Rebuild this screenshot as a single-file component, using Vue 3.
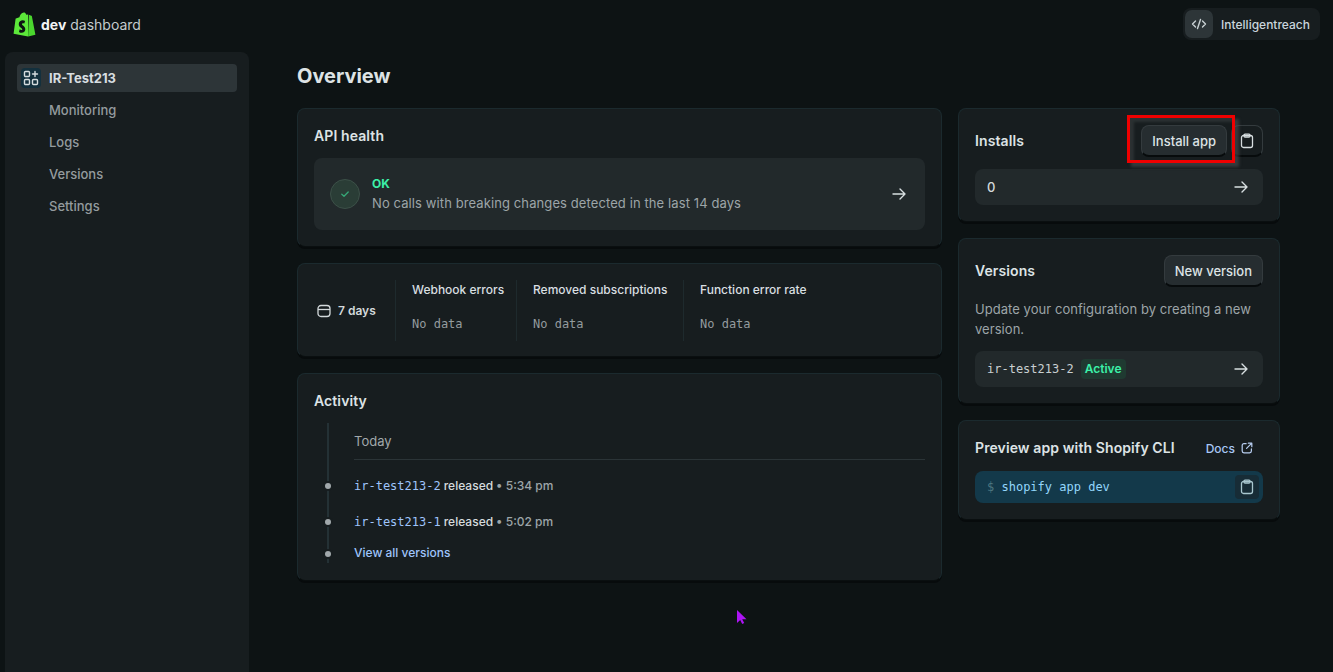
<template>
  <div class="page">
    <header class="topbar">
      <div class="brand">
        <svg class="logo" viewBox="0 0 24 26" width="23" height="25">
          <path d="M15.8 2.6 13.9 2.9C13.3 1.2 12.3.6 11.3.6 8.900.6 7.300 3 6.700 5.500L3.700 6.500C2.800 6.800 2.700 6.800 2.600 7.700L.6 22.600 15.800 25.400Z" fill="#5ce83a" />
          <path d="M16.600 2.800 15.800 25.400 23.400 23.600 19.700 4.300C19.600 3.900 19.300 3.800 19 3.800Z" fill="#4ad62e" />
          <path d="M12.600 9.300 11.800 12C10.800 11.500 9.500 11.400 9.300 12.400 9.100 13.800 13.200 14.500 12.800 18.400 12.400 21.500 9 22.500 6.200 20.700L7 18C8.100 18.900 9.500 19.200 9.700 18.200 9.900 16.700 6 16.200 6 12.500 6.100 8.700 10.300 7.800 12.600 9.300Z" fill="#0d1314" />
        </svg>
        <span class="brand-text"><b>dev</b> dashboard</span>
      </div>
      <div class="org">
        <span class="org-icon">
          <svg viewBox="0 0 16 16" width="16" height="16" fill="none" stroke="#c9d1d3" stroke-width="1.4" stroke-linecap="round" stroke-linejoin="round">
            <path d="M4.500 5 1.500 8l3 3M11.500 5l3 3-3 3M9.500 3.500l-3 9" />
          </svg>
        </span>
        <span class="org-name">Intelligentreach</span>
      </div>
    </header>

    <div class="shell">
      <nav class="sidebar">
        <a class="nav-item nav-active">
          <span class="nav-icon">
            <svg viewBox="0 0 16 16" width="16" height="16" fill="none" stroke="#d5dcde" stroke-width="1.400" stroke-linecap="round" stroke-linejoin="round">
              <rect x="1.500" y="1.500" width="5" height="5" rx="1" />
              <rect x="1.500" y="9.500" width="5" height="5" rx="1" />
              <rect x="9.500" y="9.500" width="5" height="5" rx="1" />
              <path d="M12 1.500v5M9.500 4h5" />
            </svg>
          </span>
          IR-Test213
        </a>
        <a v-for="item in navItems" :key="item" class="nav-item">{{ item }}</a>
      </nav>

      <main class="content">
        <h1>Overview</h1>
        <div class="columns">
          <div class="col-main">
            <section class="card health">
              <h2>API health</h2>
              <div class="inset health-row">
                <span class="ok-circle">
                  <svg viewBox="0 0 12 12" width="12" height="12" fill="none" stroke="#36a877" stroke-width="1.300" stroke-linecap="round" stroke-linejoin="round">
                    <path d="M2.800 6.300 5 8.300 9.200 4" />
                  </svg>
                </span>
                <div class="health-text">
                  <p class="ok">OK</p>
                  <p class="muted">No calls with breaking changes detected in the last 14 days</p>
                </div>
                <svg class="arrow" viewBox="0 0 16 16" width="16" height="16" fill="none" stroke="#d8dfe1" stroke-width="1.400" stroke-linecap="round" stroke-linejoin="round">
                  <path d="M2 8h12M9 3l5 5-5 5" />
                </svg>
              </div>
            </section>

            <section class="card metrics">
              <div class="range">
                <svg viewBox="0 0 16 16" width="16" height="16" fill="none" stroke="#d3d9db" stroke-width="1.300">
                  <rect x="2" y="2.500" width="12" height="11" rx="3" />
                  <path d="M2 6.500h12" />
                </svg>
                <span>7 days</span>
              </div>
              <div v-for="metric in metrics" :key="metric" class="metric">
                <p class="metric-title">{{ metric }}</p>
                <p class="mono no-data">No data</p>
              </div>
            </section>

            <section class="card activity">
              <h2>Activity</h2>
              <div class="timeline">
                <p class="today">Today</p>
                <div v-for="event in events" :key="event.name" class="event">
                  <i class="dot"></i>
                  <span class="mono link">{{ event.name }}</span>
                  <span class="released">released</span>
                  <span class="time">• {{ event.time }}</span>
                </div>
                <div class="event view-all">
                  <i class="dot"></i>
                  <a class="link">View all versions</a>
                </div>
              </div>
            </section>
          </div>

          <div class="col-side">
            <section class="card side-card">
              <div class="side-head">
                <h2>Installs</h2>
                <div class="install-actions">
                  <button class="btn" type="button">Install app</button>
                  <button class="btn btn-icon" type="button" aria-label="Copy">
                    <svg viewBox="0 0 16 16" width="16" height="16" fill="none" stroke="#d8dfe1" stroke-width="1.300" stroke-linejoin="round">
                      <rect x="2.500" y="2.500" width="11" height="12" rx="2" />
                      <rect x="5" y="1.200" width="6" height="2.800" rx="1" />
                    </svg>
                  </button>
                  <span class="highlight"></span>
                </div>
              </div>
              <div class="inset link-row">
                <span class="count">0</span>
                <svg class="arrow" viewBox="0 0 16 16" width="16" height="16" fill="none" stroke="#d8dfe1" stroke-width="1.400" stroke-linecap="round" stroke-linejoin="round">
                  <path d="M2 8h12M9 3l5 5-5 5" />
                </svg>
              </div>
            </section>

            <section class="card side-card">
              <div class="side-head">
                <h2>Versions</h2>
                <button class="btn" type="button">New version</button>
              </div>
              <p class="muted update">Update your configuration by creating a new version.</p>
              <div class="inset link-row">
                <span class="version">
                  <span class="mono">ir-test213-2</span>
                  <span class="badge">Active</span>
                </span>
                <svg class="arrow" viewBox="0 0 16 16" width="16" height="16" fill="none" stroke="#d8dfe1" stroke-width="1.400" stroke-linecap="round" stroke-linejoin="round">
                  <path d="M2 8h12M9 3l5 5-5 5" />
                </svg>
              </div>
            </section>

            <section class="card side-card preview">
              <div class="side-head preview-head">
                <h2>Preview app with Shopify CLI</h2>
                <a class="docs">
                  Docs
                  <svg viewBox="0 0 16 16" width="14" height="14" fill="none" stroke="#b7cdf0" stroke-width="1.400" stroke-linecap="round" stroke-linejoin="round">
                    <path d="M7 3H4.500A2 2 0 0 0 2.500 5v6.500a2 2 0 0 0 2 2H11a2 2 0 0 0 2-2V9M9.500 2.500h4v4M13.500 2.500 7.500 8.500" />
                  </svg>
                </a>
              </div>
              <div class="command">
                <span class="mono"><span class="prompt">$</span> shopify app dev</span>
                <span class="command-copy">
                  <svg viewBox="0 0 16 16" width="16" height="16" fill="none" stroke="#a9c7cf" stroke-width="1.300" stroke-linejoin="round">
                    <rect x="2.500" y="2.500" width="11" height="12" rx="2" />
                    <rect x="5" y="1.200" width="6" height="2.800" rx="1" />
                  </svg>
                </span>
              </div>
            </section>
          </div>
        </div>
      </main>
    </div>

    <svg class="cursor" viewBox="0 0 12 16" width="12" height="16">
      <path d="M1 1v13l3.200-3 2 4 2-1-2-3.800H10.500Z" fill="#ad14f5" />
    </svg>
  </div>
</template>

<script setup>
const navItems = ['Monitoring', 'Logs', 'Versions', 'Settings']
const metrics = ['Webhook errors', 'Removed subscriptions', 'Function error rate']
const events = [
  { name: 'ir-test213-2', time: '5:34 pm' },
  { name: 'ir-test213-1', time: '5:02 pm' },
]
</script>

<style>
html,
body {
  margin: 0;
  background: #0d1314;
}
</style>

<style scoped>
.page {
  position: relative;
  width: 1333px;
  height: 672px;
  overflow: hidden;
  background: #0d1314;
  color: #e3e8ea;
  font-family: Inter, "Liberation Sans", sans-serif;
  font-size: 13px;
}

p,
h1,
h2 {
  margin: 0;
}

.mono {
  font-family: "DejaVu Sans Mono", "Liberation Mono", monospace;
  font-size: 12px;
}

.topbar {
  height: 52px;
  box-sizing: border-box;
  display: flex;
  align-items: center;
  justify-content: space-between;
  padding: 0 13px 4px 13px;
}

.brand {
  display: flex;
  align-items: center;
  gap: 5px;
}

.logo {
  display: block;
}

.brand-text {
  font-size: 14px;
  color: #c4cbcd;
}

.brand-text b {
  font-weight: 700;
  color: #f2f4f5;
}

.org {
  display: flex;
  align-items: center;
  gap: 8px;
  height: 32px;
  padding: 0 10px 0 2px;
  border-radius: 8px;
  background: #171d1f;
}

.org-icon {
  width: 28px;
  height: 28px;
  display: flex;
  align-items: center;
  justify-content: center;
  border-radius: 7px;
  background: #2d3538;
}

.org-name {
  font-size: 12px;
  font-weight: 500;
  color: #c9d5dc;
}

.shell {
  display: flex;
  align-items: flex-start;
}

.sidebar {
  width: 244px;
  height: 620px;
  margin-left: 5px;
  box-sizing: border-box;
  padding: 12px 12px 0;
  border-radius: 8px 8px 0 0;
  background: #171d1f;
  display: flex;
  flex-direction: column;
  gap: 4px;
}

.nav-item {
  height: 28px;
  display: flex;
  align-items: center;
  padding-left: 32px;
  font-size: 13px;
  font-weight: 500;
  color: #949b9e;
}

.nav-active {
  gap: 8px;
  padding-left: 4px;
  border-radius: 4px;
  background: #2d3538;
  color: #d8dee0;
  font-weight: 700;
}

.nav-icon {
  width: 20px;
  height: 20px;
  display: flex;
  align-items: center;
  justify-content: center;
  border-radius: 4px;
  background: #13303d;
}

.content {
  width: 983px;
  margin-left: 48px;
}

h1 {
  margin-top: 10px;
  font-size: 20px;
  line-height: 28px;
  font-weight: 700;
  color: #dde3e5;
}

.columns {
  display: flex;
  align-items: flex-start;
  gap: 16px;
  margin-top: 18px;
}

.col-main {
  width: 645px;
  display: flex;
  flex-direction: column;
  gap: 16px;
}

.col-side {
  width: 322px;
  display: flex;
  flex-direction: column;
  gap: 16px;
}

.card {
  box-sizing: border-box;
  border: 1px solid #1b2a2e;
  border-bottom-color: #0a0f10;
  border-radius: 8px;
  background: #171d1f;
  box-shadow: 0 2px 0 #070b0c;
}

h2 {
  font-size: 14px;
  line-height: 20px;
  font-weight: 600;
  letter-spacing: 0.1px;
  color: #dde3e5;
}

.inset {
  border-radius: 8px;
  background: #22292b;
}

.muted {
  color: #9da5a8;
  font-size: 13px;
  line-height: 20px;
}

.health {
  height: 139px;
  padding: 17px 16px 0;
}

.health-row {
  height: 72px;
  margin-top: 12px;
  display: flex;
  align-items: center;
  padding: 0 18px 0 16px;
}

.ok-circle {
  width: 30px;
  height: 30px;
  box-sizing: border-box;
  display: flex;
  align-items: center;
  justify-content: center;
  border: 1px solid #3c5048;
  border-radius: 50%;
  background: #2a3d36;
}

.health-text {
  flex: 1;
  margin-left: 12px;
}

.health-text .muted {
  letter-spacing: 0.1px;
}

.ok {
  font-size: 12px;
  line-height: 18px;
  font-weight: 700;
  color: #3cf0a8;
}

.arrow {
  flex: none;
  display: block;
}

.metrics {
  height: 94px;
  display: grid;
  grid-template-columns: 97px 121px 167px 1fr;
  padding: 16px 0 15px;
}

.range {
  padding-left: 18px;
  display: flex;
  align-items: center;
  gap: 6px;
  font-size: 12px;
  font-weight: 600;
  color: #d3d9db;
}

.metric {
  padding-left: 16px;
  border-left: 1px solid #1e2a2d;
}

.metric-title {
  font-size: 12px;
  line-height: 20px;
  font-weight: 500;
  color: #d9dfe1;
}

.no-data {
  margin-top: 14px;
  line-height: 20px;
  color: #949b9e;
}

.activity {
  height: 208px;
  padding: 17px 16px 0;
}

.timeline {
  position: relative;
  margin: 12px 0 0 13px;
  padding-left: 27px;
  height: 140px;
}

.timeline::before {
  content: "";
  position: absolute;
  left: 0;
  top: 0;
  bottom: 0;
  width: 2px;
  background: #243135;
}

.today {
  height: 36px;
  line-height: 36px;
  font-size: 13px;
  color: #a1a8ab;
  border-bottom: 1px solid #2b3437;
}

.event {
  position: relative;
  display: flex;
  align-items: baseline;
  gap: 3px;
  height: 36px;
  line-height: 36px;
  font-size: 12px;
}

.today + .event {
  margin-top: 8px;
}

.dot {
  position: absolute;
  left: -29px;
  top: 15px;
  width: 6px;
  height: 6px;
  border-radius: 50%;
  background: #a1a8ab;
  box-shadow: 0 0 0 2px #171d1f;
}

.link {
  color: #9fc4fb;
}

.released {
  font-weight: 500;
  color: #d5dbdd;
}

.time {
  color: #9da5a8;
  font-weight: 500;
}

.view-all {
  height: 28px;
  line-height: 26px;
  font-weight: 500;
}

.view-all .dot {
  top: 11px;
}

.side-card {
  padding: 16px;
}

.side-head {
  display: flex;
  align-items: center;
  justify-content: space-between;
}

.install-actions {
  position: relative;
  display: flex;
  align-items: center;
  gap: 4px;
}

.btn {
  height: 32px;
  padding: 0 10px;
  box-sizing: border-box;
  border: 1px solid #343b3e;
  border-bottom: 2px solid #070b0c;
  border-radius: 8px;
  background: #262d30;
  color: #dde3e5;
  font-family: inherit;
  font-size: 13px;
  font-weight: 500;
}

.btn-icon {
  width: 32px;
  padding: 0;
  display: flex;
  align-items: center;
  justify-content: center;
  background: #171d1f;
}

.highlight {
  position: absolute;
  left: -14px;
  top: -10px;
  width: 108px;
  height: 48px;
  box-sizing: border-box;
  border: 3px solid #f00000;
  box-shadow: 4px 4px 3px rgba(90, 95, 97, 0.45), inset 4px 4px 3px rgba(90, 95, 97, 0.3);
  pointer-events: none;
}

.link-row {
  height: 36px;
  margin-top: 12px;
  display: flex;
  align-items: center;
  justify-content: space-between;
  padding: 0 14px 0 12px;
}

.count {
  font-size: 13px;
  font-weight: 500;
  color: #d3d9db;
}

.update {
  margin-top: 12px;
  letter-spacing: 0.05px;
}

.version {
  display: flex;
  align-items: center;
  gap: 7px;
  color: #c9cfd1;
}

.badge {
  padding: 0 4px;
  line-height: 20px;
  border-radius: 4px;
  background: #1f3a31;
  color: #3cf0a8;
  font-size: 12px;
  font-weight: 600;
}

.preview {
  padding-top: 17px;
}

.preview-head {
  height: 20px;
}

.docs {
  display: flex;
  align-items: center;
  gap: 5px;
  margin-right: 9px;
  font-size: 12px;
  font-weight: 500;
  color: #a8c7f5;
}

.command {
  height: 32px;
  margin-top: 13px;
  display: flex;
  align-items: center;
  justify-content: space-between;
  padding: 0 4px 0 12px;
  border-radius: 8px;
  background: #13394a;
  color: #94d6fb;
}

.prompt {
  color: #4d7680;
}

.command-copy {
  width: 24px;
  height: 24px;
  display: flex;
  align-items: center;
  justify-content: center;
  border-radius: 4px;
  background: #172c36;
}

.cursor {
  position: absolute;
  left: 736px;
  top: 609px;
}
</style>
